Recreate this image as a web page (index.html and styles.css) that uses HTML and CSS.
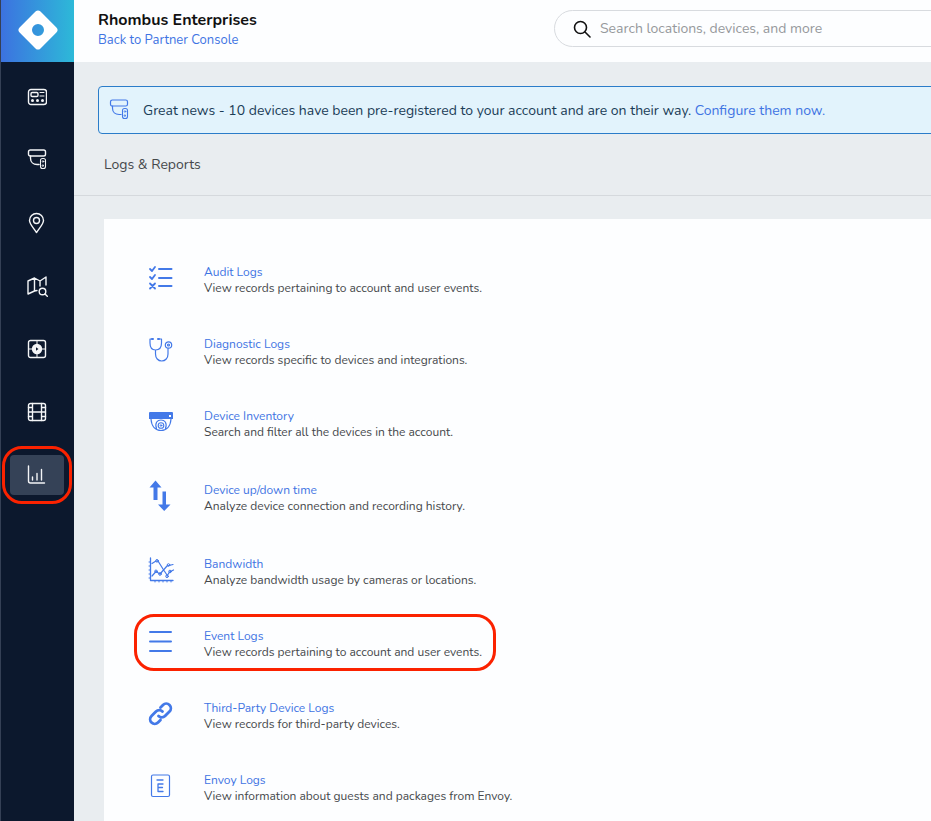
FILE: index.html
```html
<!DOCTYPE html>
<html lang="en">
<head>
<meta charset="utf-8">
<meta name="viewport" content="width=device-width, initial-scale=1">
<title>Logs &amp; Reports</title>
<link rel="stylesheet" href="styles.css">
</head>
<body>
<svg class="defs" aria-hidden="true">
  <symbol id="camera" viewBox="0 0 20 22">
    <rect x="1.500" y="1" width="17" height="6" rx="1.8"/>
    <path d="M3.500 7v2.200c0 4 2.800 6.300 6.600 6.300h2"/>
    <rect x="13.500" y="9.500" width="5" height="10" rx="2" stroke-width="1.1"/>
    <circle cx="16" cy="12.500" r=".8" stroke-width=".8"/><path stroke-width=".8" d="M15.500 16h1v1.200h-1z"/>
  </symbol>
</svg>
<div class="app">
  <aside class="sidebar">
    <a class="logo" href="#" aria-label="Home">
      <svg width="40" height="40" viewBox="0 0 40 40"><path fill="#fff" fill-rule="evenodd" d="M17.500 1.600a3.600 3.600 0 0 1 5 0L38.400 17.500a3.600 3.600 0 0 1 0 5L22.500 38.400a3.600 3.600 0 0 1-5 0L1.600 22.500a3.600 3.600 0 0 1 0-5zM20 14a6 6 0 1 0 0 12 6 6 0 0 0 0-12z"/></svg>
    </a>
    <nav class="nav" aria-label="Main">
      <a class="nav-item" href="#" aria-label="Dashboard"><svg width="20" height="18" viewBox="0 0 20 18"><rect x="1.500" y="1.500" width="18" height="15" rx="2.500"/><rect x="4" y="4.500" width="7" height="4" rx="1.200"/><path d="M13 4.500H17M13 8H17" stroke-width="1"/><g class="solid"><circle cx="5.500" cy="12.500" r="1.500"/><circle cx="10.500" cy="12.500" r="1.500"/><circle cx="15.500" cy="12.500" r="1.500"/></g></svg></a>
      <a class="nav-item" href="#" aria-label="Devices"><svg width="20" height="22"><use href="#camera"/></svg></a>
      <a class="nav-item" href="#" aria-label="Locations"><svg width="18" height="22" viewBox="0 0 18 22"><path d="M8.500 20.500C5.500 16 1.500 12 1.500 8.500a7 7 0 0 1 14 0c0 3.500-4 7.500-7 12z"/><circle cx="8.500" cy="8.500" r="3"/></svg></a>
      <a class="nav-item" href="#" aria-label="Map search"><svg width="22" height="22" viewBox="0 0 22 22"><path d="M11 15.500 8.500 16 2 19V6L8.500 3l5.500 3 6-4V10M8.500 3v13M14 6v5"/><circle cx="16.500" cy="16.500" r="3.300"/><path d="m19 19 2.300 2.300"/></svg></a>
      <a class="nav-item" href="#" aria-label="Live view"><svg width="20" height="20" viewBox="0 0 20 20"><rect x="1.500" y="1.500" width="17" height="17" rx="2"/><path d="M10 1.500v17M1.500 10h17" stroke-width="1"/><circle class="solid" cx="10" cy="10" r="5.200"/><path class="hole" d="M9 8.200v3.600l2.500-1.800z"/></svg></a>
      <a class="nav-item" href="#" aria-label="Clips"><svg width="20" height="20" viewBox="0 0 20 20"><rect x="1.500" y="1.500" width="17" height="17" rx="2"/><path d="M5.500 1.500v17M14.500 1.500v17M5.500 10h9M1.500 5.500h4M1.500 10h4M1.500 14.500h4M14.500 5.500h4M14.500 10h4M14.500 14.500h4"/></svg></a>
      <a class="nav-item active" href="#" aria-label="Reports" aria-current="page"><svg width="20" height="20" viewBox="0 0 20 20"><path d="M1.500 1v15c0 1 .500 2 2 2H17.500M5.500 15v-3M10 15V8.500M14.500 15V4.500"/></svg></a>
    </nav>
  </aside>
  <div class="page">
    <header class="topbar">
      <div class="account">
        <strong class="account-name">Rhombus Enterprises</strong>
        <a href="#">Back to Partner Console</a>
      </div>
      <label class="search">
        <svg width="18" height="18" viewBox="0 0 18 18"><circle cx="7.500" cy="7.500" r="6"/><path d="m12 12 5 5"/></svg>
        <input type="search" aria-label="Search" placeholder="Search locations, devices, and more">
      </label>
    </header>
    <div class="banner" role="status">
      <svg width="20" height="22"><use href="#camera"/></svg>
      <p>Great news - 10 devices have been pre-registered to your account and are on their way. <a href="#">Configure them now.</a></p>
    </div>
    <h1 class="page-title">Logs &amp; Reports</h1>
    <main class="card">
      <ul class="reports">
        <li class="report"><svg class="icon" viewBox="0 0 24 24"><path stroke-width="2" d="M10 3h12.500M10 12h12.500M10 20h12.500"/><path stroke-width="1.800" d="M1 3l2 2L6 1M1 11l2 2L6 9M1 17.500l5 5M6 17.500l-5 5"/></svg><div><a href="#">Audit Logs</a><p>View records pertaining to account and user events.</p></div></li>
        <li class="report"><svg class="icon" viewBox="0 0 24 24"><path stroke-width="1.200" d="M3.500 1H1v4c0 4.500 2 7 5.500 7S12.500 9.500 12.500 5V1H9.500M6.500 12v4c0 4 2.500 7 6.200 7s6.300-3 6.300-7v-5.500"/><circle cx="19.500" cy="7" r="3.200" stroke-width="1.200"/><circle cx="19.500" cy="7" r="1"  stroke-width="1.200"/><path stroke-width="2" d="M3 1h1M9 1h1"/></svg><div><a href="#">Diagnostic Logs</a><p>View records specific to devices and integrations.</p></div></li>
        <li class="report"><svg class="icon" viewBox="0 0 24 24"><path class="solid" d="M1 2h22a1 1 0 0 1 1 1v6H0V3a1 1 0 0 1 1-1z"/><path class="white" d="M20 5h2v2h-2z"/><path stroke-width="1.200" d="M2 9c.500 7.500 4.500 11.500 10 11.500s9.500-4 10-11.500M7.500 18.500c-2-6 1-8.500 4.500-8.500s6.500 2.500 4.500 8.500"/><circle cx="12" cy="15.500" r="2.800" stroke-width="1.100"/><circle cx="12" cy="15.500" r=".8" stroke-width="1"/></svg><div><a href="#">Device Inventory</a><p>Search and filter all the devices in the account.</p></div></li>
        <li class="report"><svg class="icon tall" viewBox="0 0 24 32"><path class="solid" d="M6.500 .500 12.500 7.500H8.500V20H4.500V7.500H.500zM13.500 11.500h3.500v13h4.500l-6.300 6.500L9 24.500h4.500z"/></svg><div><a href="#">Device up/down time</a><p>Analyze device connection and recording history.</p></div></li>
        <li class="report"><svg class="icon" viewBox="0 0 24 24"><path stroke-width="1.300" d="M1.500 0v22.500H24"/><path stroke-width="1" d="M0 4h1.500M0 8h1.500M0 12h1.500M0 16h1.500M0 20h1.500M6 23v1M10 23v1M14 23v1M18 23v1M22 23v1"/><path stroke-width="1.200" d="M3 5.500l4-2.500h2l5 8 4 6M3 18l4-4.500 4 2.500 7-8L24 6.500M18 18l2.500-4 4-2"/><g stroke-width="1"><circle cx="8" cy="2.800" r="1.300"/><circle cx="7" cy="13.300" r="1.300"/><circle cx="11" cy="16" r="1.300"/><circle cx="18" cy="18.300" r="1.300"/><circle cx="19.500" cy="7" r="1.300"/><circle cx="21" cy="13.500" r="1.300"/></g></svg><div><a href="#">Bandwidth</a><p>Analyze bandwidth usage by cameras or locations.</p></div></li>
        <li class="report highlighted"><svg class="icon" viewBox="0 0 24 24"><path stroke-width="2" d="M1 2h21M1 11.500h21M1 21h21"/></svg><div><a href="#">Event Logs</a><p>View records pertaining to account and user events.</p></div></li>
        <li class="report"><svg class="icon" viewBox="0 0 24 24"><path stroke-width="2.800" d="M9.500 14a4.500 4.500 0 0 0 6.500 0l4.500-4.500a4.500 4.500 0 0 0-6.500-6.500l-2.500 2.500M13.500 9.500a4.500 4.500 0 0 0-6.500 0L2.500 14a4.500 4.500 0 0 0 6.500 6.500l2.500-2.500"/></svg><div><a href="#">Third-Party Device Logs</a><p>View records for third-party devices.</p></div></li>
        <li class="report"><svg class="icon" viewBox="0 0 24 24"><rect x="2.500" y="1" width="18" height="21.500" rx="1.500" stroke-width="1.200"/><path d="M8 6h6M14 10H9v7.500h5M9 13.500h4.500" stroke-width="1.300"/></svg><div><a href="#">Envoy Logs</a><p>View information about guests and packages from Envoy.</p></div></li>
      </ul>
    </main>
  </div>
</div>
</body>
</html>
```
FILE: styles.css
```css
* { box-sizing: border-box; }
body {
  margin: 0;
  font-family: Nunito, "Noto Sans", sans-serif;
  font-size: 14px;
  color: #45484b;
  background: #e9edf0;
}
a { color: #3f74e3; text-decoration: none; }
p, h1, ul { margin: 0; padding: 0; }
svg {
  flex: none;
  fill: none;
  stroke: currentColor;
  stroke-width: 1.4;
  stroke-linecap: round;
  stroke-linejoin: round;
}
.solid { fill: currentColor; stroke: none; }
.hole { fill: #0c182d; stroke: none; }
.white { fill: #fff; stroke: none; }
.defs { position: absolute; width: 0; height: 0; }
.app { display: flex; min-height: 100vh; overflow: hidden; }
.sidebar {
  flex: none;
  width: 74px;
  background: #0c182d;
  border-left: 1px solid #354055;
}
.logo {
  display: flex;
  align-items: center;
  justify-content: center;
  height: 62px;
  padding-bottom: 3px;
  background: linear-gradient(90deg, #3c72e0, #2db9d8);
}
.logo svg { stroke: none; }
.nav {
  display: flex;
  flex-direction: column;
  align-items: center;
  gap: 23px;
  padding: 15px 1px 0 0;
}
.nav-item {
  position: relative;
  display: flex;
  align-items: center;
  justify-content: center;
  width: 54px;
  height: 40px;
  border-radius: 4px;
  color: #f4f5f7;
}
.nav-item.active { background: #354257; }
.nav-item.active::after {
  content: "";
  position: absolute;
  inset: -9px -8px;
  border: 3px solid #fb2200;
  border-radius: 20px;
}
.page { flex: 1; min-width: 0; display: flex; flex-direction: column; }
.topbar {
  display: flex;
  align-items: center;
  height: 62px;
  padding: 0 0 5px 24px;
  background: #fdfeff;
}
.account {
  flex: 0 0 456px;
  display: flex;
  flex-direction: column;
  padding-top: 2px;
  font-size: 13px;
  line-height: 20px;
}
.account-name { font-size: 16px; color: #111; }
.search {
  flex: 1;
  display: flex;
  align-items: center;
  gap: 9px;
  height: 37px;
  margin-right: -40px;
  padding-left: 18px;
  border: 1px solid #d8dbdf;
  border-radius: 19px;
  color: #111;
}
.search svg { stroke-width: 1.6; }
.search input {
  flex: 1;
  border: 0;
  outline: 0;
  padding: 0;
  background: none;
  font: inherit;
}
.search input::placeholder { color: #96999c; opacity: 1; }
.banner {
  display: flex;
  align-items: center;
  gap: 14px;
  height: 48px;
  margin: 24px -40px 0 24px;
  padding-left: 10px;
  border: 1px solid #2b7cc9;
  border-radius: 4px;
  background: #e2f3fc;
  color: #1b3d57;
  white-space: nowrap;
}
.banner svg { color: #4379e8; stroke-width: 1.2; }
.page-title {
  height: 62px;
  padding: 21px 30px;
  border-bottom: 1px solid #d5d9dd;
  font-size: 14px;
  font-weight: 400;
  line-height: 20px;
}
.card {
  flex: 1;
  margin: 23px -40px 0 30px;
  padding: 45px 45px 9px;
  background: #fdfeff;
}
.reports { display: flex; flex-direction: column; align-items: flex-start; gap: 40px; list-style: none; }
.report {
  position: relative;
  display: flex;
  align-items: center;
  gap: 31px;
  font-size: 12px;
  line-height: 16px;
}
.icon { width: 24px; height: 24px; margin-bottom: 4px; color: #4379e8; overflow: visible; }
.icon.tall { height: 32px; }
.report.highlighted::after {
  content: "";
  position: absolute;
  inset: -14px -14px -11px -15px;
  border: 3px solid #fb2200;
  border-radius: 20px;
}
```
